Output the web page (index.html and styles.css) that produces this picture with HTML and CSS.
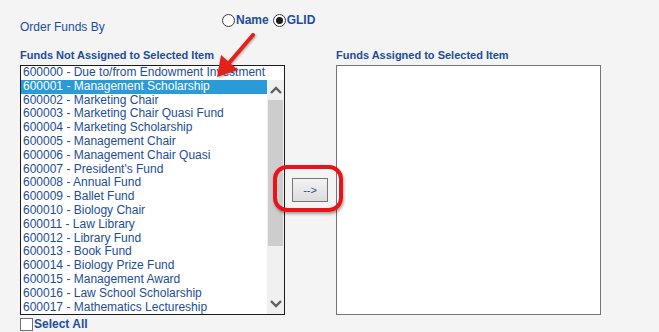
FILE: index.html
```html
<!DOCTYPE html>
<html lang="en">

<head>
    <meta charset="UTF-8">
    <meta name="viewport" content="width=device-width, initial-scale=1.0">
    <title>Assign Funds</title>
    <link rel="stylesheet" href="styles.css">
</head>

<body>

    <div class="page">
        <div class="order-row">
            <span class="order-label">Order Funds By</span>
            <div class="radios">
                <span class="radio"></span><span class="radio-text">Name</span>
                <span class="radio checked"></span><span class="radio-text">GLID</span>
            </div>
        </div>

        <div class="lists">
            <div class="col">
                <div class="col-title">Funds Not Assigned to Selected Item</div>
                <div class="listbox dark">
                    <ul class="options">
                        <li>600000 - Due to/from Endowment Investment</li>
                        <li class="selected">600001 - Management Scholarship</li>
                        <li>600002 - Marketing Chair</li>
                        <li>600003 - Marketing Chair Quasi Fund</li>
                        <li>600004 - Marketing Scholarship</li>
                        <li>600005 - Management Chair</li>
                        <li>600006 - Management Chair Quasi</li>
                        <li>600007 - President's Fund</li>
                        <li>600008 - Annual Fund</li>
                        <li>600009 - Ballet Fund</li>
                        <li>600010 - Biology Chair</li>
                        <li>600011 - Law Library</li>
                        <li>600012 - Library Fund</li>
                        <li>600013 - Book Fund</li>
                        <li>600014 - Biology Prize Fund</li>
                        <li>600015 - Management Award</li>
                        <li>600016 - Law School Scholarship</li>
                        <li>600017 - Mathematics Lectureship</li>
                    </ul>
                    <div class="scrollbar">
                        <div class="scroll-btn">
                            <svg width="12" height="8" viewBox="0 0 12 8"><path d="M1 7 L6 2 L11 7" fill="none" stroke="#5f5f5f" stroke-width="2.4"/></svg>
                        </div>
                        <div class="track">
                            <div class="thumb"></div>
                        </div>
                        <div class="scroll-btn">
                            <svg width="12" height="8" viewBox="0 0 12 8"><path d="M1 1 L6 6 L11 1" fill="none" stroke="#5f5f5f" stroke-width="2.4"/></svg>
                        </div>
                    </div>
                </div>
                <label class="select-all"><span class="checkbox"></span>Select All</label>
            </div>

            <div class="move">
                <div class="callout">
                    <button class="move-btn">--&gt;</button>
                </div>
            </div>

            <div class="col">
                <div class="col-title">Funds Assigned to Selected Item</div>
                <div class="listbox"></div>
            </div>
        </div>

        <!-- annotation arrow pointing at the selected fund -->
        <svg class="pointer" width="60" height="60" viewBox="0 0 60 60">
            <line x1="52" y1="5" x2="28" y2="33" stroke="#e3231b" stroke-width="4" stroke-linecap="round"/>
            <polygon points="16,47 20,25 37,40" fill="#e3231b"/>
        </svg>
    </div>

</body>

</html>
```

FILE: styles.css
```css
body,
html {
    margin: 0;
    background: #f4f4f4;
    font-family: "Liberation Sans", Arial, sans-serif;
    color: #1d4d9b;
}

* {
    box-sizing: border-box;
}

.page {
    position: relative;
    padding-left: 20px;
    height: 332px;
    overflow: hidden;
}

.order-row {
    display: flex;
    height: 49px;
}

.order-label {
    width: 202px;
    padding-top: 20px;
    font-size: 12px;
    line-height: 14px;
}

.radios {
    display: flex;
    align-items: center;
    height: 14px;
    margin-top: 13px;
    font-size: 12px;
    font-weight: bold;
}

.radio {
    position: relative;
    width: 13px;
    height: 13px;
    border: 1px solid #3a3a3a;
    border-radius: 50%;
    background: #fff;
    margin-right: 1px;
}

.radio.checked::after {
    content: "";
    position: absolute;
    left: 2px;
    top: 2px;
    width: 7px;
    height: 7px;
    border-radius: 50%;
    background: #1a1a1a;
}

.radio-text {
    margin-right: 4px;
}

.lists {
    display: flex;
}

.col {
    width: 265px;
}

.col-title {
    font-size: 11px;
    font-weight: bold;
    line-height: 13px;
    margin-bottom: 3px;
}

.listbox {
    display: flex;
    height: 250px;
    background: #fff;
    border: 1px solid #747474;
}

.listbox.dark {
    border-color: #1c1c1c;
}

.options {
    list-style: none;
    margin: 0;
    padding: 0;
    flex: 1;
    font-size: 12px;
    line-height: 13.8px;
    white-space: nowrap;
}

.options li {
    padding-left: 2px;
}

.options li.selected {
    background: #2a9bd7;
    color: #fff;
}

.scrollbar {
    display: flex;
    flex-direction: column;
    width: 17px;
    margin-top: 14px;
    background: #f0f0f0;
}

.scroll-btn {
    display: flex;
    align-items: center;
    justify-content: center;
    height: 20px;
}

.track {
    flex: 1;
    padding: 0 1px;
}

.thumb {
    height: 146px;
    background: #cdcdcd;
}

.select-all {
    display: flex;
    align-items: center;
    margin-top: 2px;
    font-size: 12px;
    font-weight: bold;
    line-height: 14px;
}

.checkbox {
    width: 13px;
    height: 13px;
    border: 1px solid #707070;
    background: #fff;
    margin-right: 1px;
}

.move {
    width: 51px;
    padding-top: 129px;
    padding-left: 7px;
}

.callout {
    position: relative;
    width: 36px;
    height: 24px;
}

/* red highlight ring round the move button */
.callout::before {
    content: "";
    position: absolute;
    left: -19px;
    top: -13px;
    right: -15px;
    bottom: -10px;
    border: 4px solid #e8141a;
    border-radius: 14px;
    box-shadow: 1px 2px 3px rgba(0, 0, 0, 0.35);
}

.move-btn {
    width: 36px;
    height: 24px;
    padding: 0;
    border: 1px solid #767676;
    background: linear-gradient(#f3f3f3, #dcdcdc);
    color: #1d4d9b;
    font-family: "Liberation Sans", Arial, sans-serif;
    font-size: 11px;
}

.pointer {
    position: absolute;
    left: 201px;
    top: 30px;
    filter: drop-shadow(1px 1px 1px rgba(0, 0, 0, 0.3));
}
```
